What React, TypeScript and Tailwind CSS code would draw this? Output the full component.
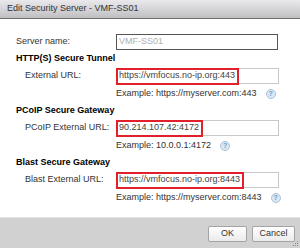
import React from 'react'

const font = { fontFamily: '"Liberation Sans", Arial, sans-serif' }

function HelpIcon() {
  return (
    <span className="ml-[9px] inline-flex h-[10px] w-[10px] items-center justify-center rounded-full border border-[#a9c3da] bg-[#dbe8f3] text-[7px] font-bold leading-none text-[#6f9cc4]">
      ?
    </span>
  )
}

function UrlRow({ label, value }: { label: string; value: string }) {
  return (
    <div className="flex h-[18px] items-center">
      <div className="w-[116px] shrink-0 whitespace-nowrap pl-[25px] text-[#333]">{label}</div>
      <div className="flex h-[16px] w-[163px] items-center border border-[#c9c9c9] bg-white">
        {/* red annotation box drawn on the screenshot */}
        <span className="-ml-px flex h-[17px] items-center whitespace-nowrap border-2 border-[#e2202c] pl-[1px] pr-[2px] text-[#444]">
          {value}
        </span>
      </div>
    </div>
  )
}

function Example({ text }: { text: string }) {
  return (
    <div className="flex h-[17px] items-center whitespace-nowrap pl-[116px] text-[#333]">
      {text}
      <HelpIcon />
    </div>
  )
}

function Heading({ children }: { children: React.ReactNode }) {
  return <div className="flex h-[17px] items-center pl-[16px] font-bold text-black">{children}</div>
}

export default function App() {
  return (
    <div className="flex h-[248px] w-[300px] flex-col bg-white text-[9px]" style={font}>
      {/* Title bar */}
      <div className="flex h-[19px] shrink-0 items-center border-b border-[#6e6e6e] bg-gradient-to-b from-[#ebe9ed] to-[#bfbfc1] pl-[7px] text-[9px] text-[#333]">
        Edit Security Server - VMF-SS01
      </div>

      <div className="flex-1 pt-[14px]">
        <div className="flex h-[17px] items-center">
          <div className="w-[116px] shrink-0 pl-[16px] text-[#333]">Server name:</div>
          <div className="flex h-[16px] w-[162px] items-center border border-[#555] bg-white pl-[2px] text-[#b0b0b0]">
            VMF-SS01
          </div>
        </div>

        <Heading>HTTP(S) Secure Tunnel</Heading>
        <UrlRow label="External URL:" value="https://vmfocus.no-ip.org:443" />
        <Example text="Example: https://myserver.com:443" />

        <Heading>PCoIP Secure Gateway</Heading>
        <UrlRow label="PCoIP External URL:" value="90.214.107.42:4172" />
        <Example text="Example: 10.0.0.1:4172" />

        <Heading>Blast Secure Gateway</Heading>
        <UrlRow label="Blast External URL:" value="https://vmfocus.no-ip.org:8443" />
        <Example text="Example: https://myserver.com:8443" />
      </div>

      {/* Footer */}
      <div className="relative flex h-[31px] shrink-0 items-start justify-end gap-[5px] border-t border-[#e4e4e4] bg-[#d1d1d1] pr-[5px] pt-[8px]">
        <button className="h-[16px] w-[39px] rounded-[2px] border border-[#a4a4a4] bg-gradient-to-b from-white to-[#ebebeb] text-[9px] text-[#333]">
          OK
        </button>
        <button className="h-[16px] w-[43px] rounded-[2px] border border-[#a4a4a4] bg-gradient-to-b from-white to-[#ebebeb] text-[9px] text-[#333]">
          Cancel
        </button>
        <svg className="absolute bottom-[1px] right-[1px]" width="6" height="6" viewBox="0 0 6 6">
          <rect x="4" y="0" width="1" height="1" fill="#8a8a8a" />
          <rect x="2" y="2" width="1" height="1" fill="#8a8a8a" />
          <rect x="4" y="2" width="1" height="1" fill="#8a8a8a" />
          <rect x="0" y="4" width="1" height="1" fill="#8a8a8a" />
          <rect x="2" y="4" width="1" height="1" fill="#8a8a8a" />
          <rect x="4" y="4" width="1" height="1" fill="#8a8a8a" />
        </svg>
      </div>
    </div>
  )
}
